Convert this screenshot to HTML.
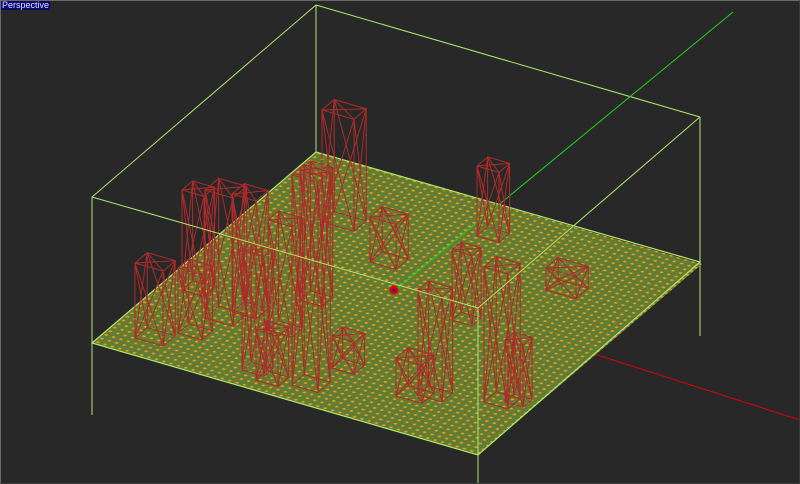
<!DOCTYPE html>
<html><head><meta charset="utf-8"><style>
html,body{margin:0;padding:0;background:#282828;width:800px;height:484px;overflow:hidden}
#v{position:absolute;left:0;top:0;width:800px;height:484px}
#lab{position:absolute;left:1px;top:1px;width:48px;height:9px;background:#0a0a6e;color:#dfe0ff;font:9px/9px "Liberation Sans",sans-serif;padding-left:1px}
#bd{position:absolute;left:0;top:0;width:798px;height:482px;border:1px solid #6a6a6a;border-right-color:#3a3a3a;border-bottom-color:#3a3a3a}
</style></head><body>
<svg id="v" width="800" height="484" viewBox="0 0 800 484">
<defs>
<pattern id="dots" patternUnits="userSpaceOnUse" width="0.019" height="0.019">
<rect width="0.019" height="0.019" fill="#5f7d36"/>
<circle cx="0.0095" cy="0.0095" r="0.004" fill="#f39a0c"/>
</pattern>
</defs>
<g stroke="#ace86e" stroke-width="1" fill="none">
<line x1="316" y1="5" x2="316" y2="152"/>
<line x1="316" y1="5" x2="700" y2="117"/>
<line x1="316" y1="5" x2="92" y2="197"/>
<line x1="700" y1="117" x2="700" y2="336"/>
<line x1="92" y1="197" x2="92" y2="415"/>
</g>
<line x1="395" y1="290" x2="800" y2="420" stroke="#e00000" stroke-width="1"/>
<g transform="matrix(386,112,224,-191,92,343)">
<rect x="0" y="0" width="1" height="1" fill="url(#dots)"/>
</g>
<polygon points="92,343 316,152 700,262 478,455" fill="none" stroke="#ace86e" stroke-width="1.2"/>
<line x1="395" y1="290" x2="733" y2="12" stroke="#1ed21e" stroke-width="1"/>
<g id="towers" stroke="#ad2a2a" stroke-width="1" fill="none"></g>
<circle cx="394" cy="290" r="4.5" fill="#e00000"/>
<circle cx="394" cy="290" r="1.5" fill="#1010c0"/>
<g stroke="#ace86e" stroke-width="1" fill="none">
<line x1="92" y1="197" x2="478" y2="308"/>
<line x1="478" y1="308" x2="700" y2="117"/>
<line x1="478" y1="308" x2="478" y2="484"/>
</g>
</svg>
<div id="bd"></div>
<div id="lab">Perspective</div>
<script>
var T=[
[135,338,28,16,75],[178,333,24,14,65],[205,318,28,18,128],[232,312,24,16,118],
[256,380,22,14,50],[292,385,26,16,210],[268,330,24,14,110],[322,222,32,16,112],
[370,262,26,16,45],[477,236,22,14,70],[332,368,22,14,32],[396,396,26,16,38],
[418,395,24,14,105],[452,320,20,12,70],[484,402,24,16,135],[505,402,18,12,62],
[546,290,30,16,22],[182,290,22,14,100],[242,370,22,12,120],[300,300,22,14,130]
];
var s="";
T.forEach(function(t){
 var x=t[0],y=t[1],w=t[2],d=t[3],h=t[4];
 var ux=w,uy=w*0.29,vx=d*0.76,vy=-d*0.65;
 var b=[[x,y],[x+ux,y+uy],[x+ux+vx,y+uy+vy],[x+vx,y+vy]];
 var tp=b.map(function(p){return [p[0],p[1]-h]});
 function P(a){return a[0].toFixed(1)+","+a[1].toFixed(1)}
 s+='<polygon points="'+b.map(P).join(" ")+'"/>';
 s+='<polygon points="'+tp.map(P).join(" ")+'"/>';
 s+='<path d="M'+P(tp[0])+"L"+P(tp[2])+"M"+P(tp[1])+"L"+P(tp[3])+'"/>';
 for(var i=0;i<4;i++){var j=(i+1)%4;
  s+='<path d="M'+P(b[i])+"L"+P(tp[i])+"M"+P(b[i])+"L"+P(tp[j])+"M"+P(b[j])+"L"+P(tp[i])+'"/>';}
});
document.getElementById("towers").innerHTML=s;
</script>
</body></html>
